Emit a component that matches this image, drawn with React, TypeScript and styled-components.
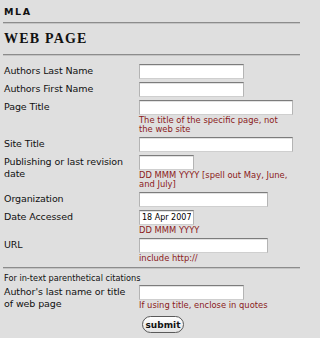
import type { ReactNode } from 'react';
import styled, { createGlobalStyle } from 'styled-components';

const GlobalStyle = createGlobalStyle`
  body {
    margin: 0;
    background: #dfdfdf;
    font-family: "DejaVu Sans", "Open Sans", sans-serif;
    color: #111;
  }
`;

type FieldRow = {
  label: ReactNode;
  width: number;
  hint?: ReactNode;
  value?: string;
};

const fields: FieldRow[] = [
  { label: 'Authors Last Name', width: 105 },
  { label: 'Authors First Name', width: 105 },
  {
    label: 'Page Title',
    width: 154,
    hint: (
      <>
        The title of the specific page, not
        <br />
        the web site
      </>
    ),
  },
  { label: 'Site Title', width: 154 },
  {
    label: (
      <>
        Publishing or last revision
        <br />
        date
      </>
    ),
    width: 55,
    hint: (
      <>
        DD MMM YYYY [spell out May, June,
        <br />
        and July]
      </>
    ),
  },
  { label: 'Organization', width: 129 },
  { label: 'Date Accessed', width: 55, value: '18 Apr 2007', hint: 'DD MMM YYYY' },
  { label: 'URL', width: 129, hint: 'include http://' },
];

function App() {
  return (
    <Page>
      <GlobalStyle />
      <Kicker>MLA</Kicker>
      <Rule />
      <Heading>WEB PAGE</Heading>
      <Rule />
      <Form onSubmit={(e) => e.preventDefault()}>
        {fields.map((f, i) => (
          <Row key={i}>
            <Label>{f.label}</Label>
            <Cell>
              <TextInput $w={f.width} defaultValue={f.value} />
              {f.hint ? <Hint>{f.hint}</Hint> : null}
            </Cell>
          </Row>
        ))}
      </Form>
      <Rule />
      <Note>For in-text parenthetical citations</Note>
      <Row>
        <Label>
          Author's last name or title
          <br />
          of web page
        </Label>
        <Cell>
          <TextInput $w={105} />
          <Hint>If using title, enclose in quotes</Hint>
          <Submit type="button">submit</Submit>
        </Cell>
      </Row>
    </Page>
  );
}

export default App;

const Page = styled.div`
  width: 300px;
  height: 338px;
  overflow: hidden;
`;

const Kicker = styled.div`
  height: 22px;
  box-sizing: border-box;
  padding: 6px 0 0 4px;
  font-family: "DejaVu Sans", sans-serif;
  font-weight: bold;
  font-size: 9.5px;
  line-height: 12px;
  letter-spacing: 1.6px;
  color: #111;
`;

const Heading = styled.h1`
  margin: 0;
  height: 30px;
  box-sizing: border-box;
  padding: 7px 0 0 4px;
  font-family: "Liberation Serif", serif;
  font-weight: bold;
  font-size: 14px;
  line-height: 16px;
  letter-spacing: 1.2px;
  color: #111;
`;

const Rule = styled.div`
  margin-left: 3px;
  height: 0;
  border-top: 1px solid #8c8c8c;
  border-bottom: 1px solid #c4c4c4;
`;

const Form = styled.form`
  padding: 8px 0 4px;
  display: flex;
  flex-direction: column;
  gap: 3px;
`;

const Row = styled.div`
  display: grid;
  grid-template-columns: 139px 1fr;
  align-items: start;
`;

const Label = styled.div`
  padding: 1px 0 0 4px;
  font-size: 9.5px;
  line-height: 12px;
  letter-spacing: -0.1px;
  white-space: nowrap;
  color: #111;
`;

const Cell = styled.div`
  display: flex;
  flex-direction: column;
  align-items: flex-start;
`;

const TextInput = styled.input<{ $w: number }>`
  width: ${(p) => p.$w}px;
  height: 15px;
  box-sizing: border-box;
  margin: 0;
  padding: 0 2px;
  background: #fff;
  border: 1px solid #b4b4b4;
  border-top-color: #7c7c7c;
  border-bottom-color: #cfcfcf;
  box-shadow: inset 0 1px 0 #e2e2e2;
  font-family: "DejaVu Sans", sans-serif;
  font-size: 8px;
  color: #000;
  outline: none;
`;

const Hint = styled.div`
  margin-top: 1px;
  font-size: 8.4px;
  line-height: 9px;
  white-space: nowrap;
  color: #8b1a1a;
`;

const Note = styled.div`
  padding: 4px 0 1px 4px;
  font-size: 8.2px;
  line-height: 11px;
  color: #111;
`;

const Submit = styled.button`
  margin: 6px 0 0 3px;
  width: 42px;
  height: 17px;
  padding: 0;
  border: 1px solid #5a5a5a;
  border-radius: 9px;
  background: linear-gradient(#ffffff, #e4e4e4);
  font-family: "DejaVu Sans", sans-serif;
  font-size: 9px;
  font-weight: 600;
  color: #111;
`;
